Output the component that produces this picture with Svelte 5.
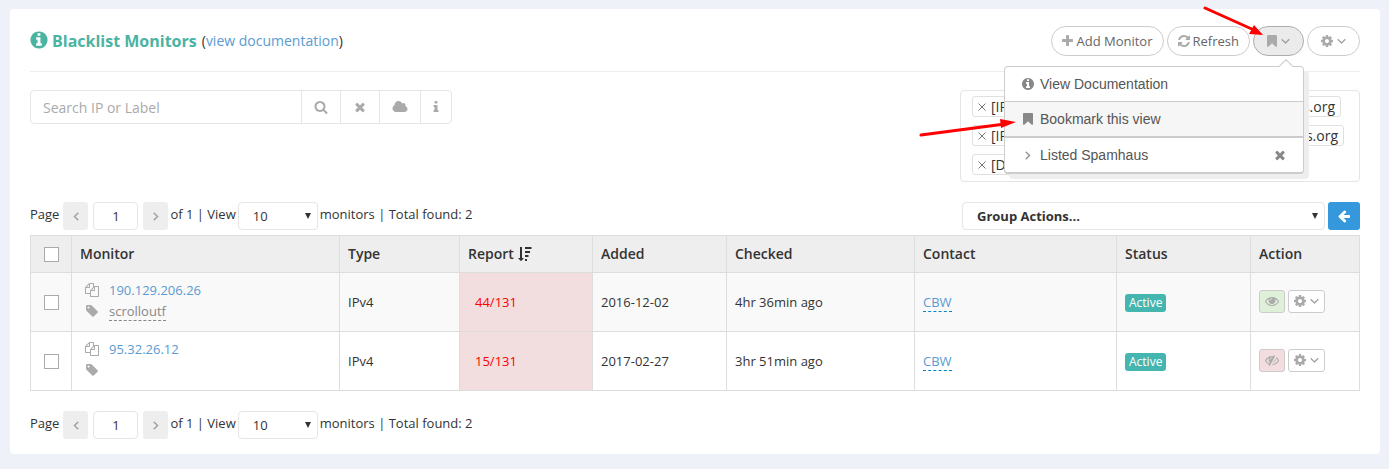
<script lang="ts">
  interface Monitor {
    address: string;
    label: string;
    type: string;
    report: string;
    added: string;
    checked: string;
    contact: string;
    watched: boolean;
  }

  const monitors: Monitor[] = [
    {
      address: '190.129.206.26',
      label: 'scrolloutf',
      type: 'IPv4',
      report: '44/131',
      added: '2016-12-02',
      checked: '4hr 36min ago',
      contact: 'CBW',
      watched: true
    },
    {
      address: '95.32.26.12',
      label: '',
      type: 'IPv4',
      report: '15/131',
      added: '2017-02-27',
      checked: '3hr 51min ago',
      contact: 'CBW',
      watched: false
    }
  ];

  const filters = [
    { kind: '[IP]', host: 'spamhaus.org', size: 'wide' },
    { kind: '[IP]', host: 'spamhaus.org', size: 'wider' },
    { kind: '[D]', host: '', size: 'short' }
  ];

  // Icon outlines on a 1792 unit grid
  const icons: Record<string, string> = {
    infoCircle:
      'M1152 1376v-160q0-14-9-23t-23-9h-96v-512q0-14-9-23t-23-9h-320q-14 0-23 9t-9 23v160q0 14 9 23t23 9h96v320h-96q-14 0-23 9t-9 23v160q0 14 9 23t23 9h448q14 0 23-9t9-23zm-128-896v-160q0-14-9-23t-23-9h-192q-14 0-23 9t-9 23v160q0 14 9 23t23 9h192q14 0 23-9t9-23zm640 416q0 209-103 385.5t-279.5 279.5-385.5 103-385.5-103-279.5-279.5-103-385.5 103-385.5 279.5-279.5 385.5-103 385.5 103 279.5 279.5 103 385.5z',
    plus: 'M1600 736v192q0 40-28 68t-68 28h-416v416q0 40-28 68t-68 28h-192q-40 0-68-28t-28-68v-416h-416q-40 0-68-28t-28-68v-192q0-40 28-68t68-28h416v-416q0-40 28-68t68-28h192q40 0 68 28t28 68v416h416q40 0 68 28t28 68z',
    refresh:
      'M1639 1056q0 5-1 7-64 268-268 434.5t-478 166.5q-146 0-282.5-55t-243.5-157l-129 129q-19 19-45 19t-45-19-19-45v-448q0-26 19-45t45-19h448q26 0 45 19t19 45-19 45l-137 137q71 66 161 102t187 36q134 0 250-65t186-179q11-17 53-117 8-23 30-23h192q13 0 22.5 9.5t9.5 22.5zm25-800v448q0 26-19 45t-45 19h-448q-26 0-45-19t-19-45 19-45l138-138q-148-137-349-137-134 0-250 65t-186 179q-11 17-53 117-8 23-30 23h-199q-13 0-22.5-9.5t-9.5-22.5v-7q65-268 270-434.5t480-166.5q146 0 284 55.5t245 156.5l130-129q19-19 45-19t45 19 19 45z',
    bookmark:
      'M1420 128q23 0 44 9 33 13 52.5 41t19.5 62v1289q0 34-19.5 62t-52.5 41q-19 8-44 8-48 0-83-32l-441-424-441 424q-36 33-83 33-23 0-44-9-33-13-52.5-41t-19.5-62v-1289q0-34 19.5-62t52.5-41q21-9 44-9h1048z',
    cog: 'M1152 896q0-106-75-181t-181-75-181 75-75 181 75 181 181 75 181-75 75-181zm512-109v222q0 12-8 23t-20 13l-185 28q-19 54-39 91 35 50 107 138 10 12 10 25t-9 23q-27 37-99 108t-94 71q-12 0-26-9l-138-108q-44 23-91 38-16 136-29 186-7 28-36 28h-222q-14 0-24.5-8.5t-11.5-21.5l-28-184q-49-16-90-37l-141 107q-10 9-25 9-14 0-25-11-126-114-165-168-7-10-7-23 0-12 8-23 15-21 51-66.5t54-70.5q-27-50-41-99l-183-27q-13-2-21-12.5t-8-23.5v-222q0-12 8-23t19-13l186-28q14-46 39-92-40-57-107-138-10-12-10-24 0-10 9-23 26-36 98.5-107.5t94.5-71.5q13 0 26 10l138 107q44-23 91-38 16-136 29-186 7-28 36-28h222q14 0 24.5 8.5t11.5 21.5l28 184q49 16 90 37l142-107q9-9 24-9 13 0 25 10 129 119 165 170 7 8 7 22 0 12-8 23-15 21-51 66.5t-54 70.5q26 50 41 98l183 28q13 2 21 12.5t8 23.5z',
    search:
      'M1216 832q0-185-131.5-316.5t-316.5-131.5-316.5 131.5-131.5 316.5 131.5 316.5 316.5 131.5 316.5-131.5 131.5-316.5zm512 832q0 52-38 90t-90 38q-54 0-90-38l-343-342q-179 124-399 124-143 0-273.5-55.5t-225-150-150-225-55.5-273.5 55.5-273.5 150-225 225-150 273.5-55.5 273.5 55.5 225 150 150 225 55.5 273.5q0 220-124 399l343 343q37 37 37 90z',
    times:
      'M1490 1322q0 40-28 68l-136 136q-28 28-68 28t-68-28l-294-294-294 294q-28 28-68 28t-68-28l-136-136q-28-28-28-68t28-68l294-294-294-294q-28-28-28-68t28-68l136-136q28-28 68-28t68 28l294 294 294-294q28-28 68-28t68 28l136 136q28 28 28 68t-28 68l-294 294 294 294q28 28 28 68z',
    cloud:
      'M1984 1152q0 159-112.5 271.5t-271.5 112.5h-1088q-185 0-316.5-131.5t-131.5-316.5q0-132 71-241.5t187-163.5q-2-28-2-43 0-212 150-362t362-150q158 0 286.5 88t187.5 230q70-62 166-62 106 0 181 75t75 181q0 75-41 138 129 30 213 134.5t84 239.5z',
    info: 'M1216 1344v128q0 26-19 45t-45 19h-512q-26 0-45-19t-19-45v-128q0-26 19-45t45-19h64v-384h-64q-26 0-45-19t-19-45v-128q0-26 19-45t45-19h384q26 0 45 19t19 45v576h64q26 0 45 19t19 45zm-128-1152v192q0 26-19 45t-45 19h-256q-26 0-45-19t-19-45v-192q0-26 19-45t45-19h256q26 0 45 19t19 45z',
    tag: 'M576 448q0-53-37.5-90.5t-90.5-37.5-90.5 37.5-37.5 90.5 37.5 90.5 90.5 37.5 90.5-37.5 37.5-90.5zm1067 576q0 53-37 90l-491 492q-39 37-91 37-53 0-90-37l-715-716q-38-37-64.5-101t-26.5-117v-416q0-52 38-90t90-38h416q53 0 117 26.5t102 64.5l715 714q37 39 37 91z',
    files:
      'M1696 384q40 0 68 28t28 68v1216q0 40-28 68t-68 28h-960q-40 0-68-28t-28-68v-288h-544q-40 0-68-28t-28-68v-672q0-40 20-88t48-76l408-408q28-28 76-48t88-20h416q40 0 68 28t28 68v328q68-40 128-40h416zm-544 213l-299 299h299v-299zm-640-384l-299 299h299v-299zm196 647l316-316v-416h-384v416q0 40-28 68t-68 28h-416v640h512v-256q0-40 20-88t48-76zm956 804v-1152h-384v416q0 40-28 68t-68 28h-416v640h896z',
    arrowLeft:
      'M1664 896v128q0 53-32.5 90.5t-84.5 37.5h-704l293 294q38 36 38 90t-38 90l-75 76q-37 37-90 37-52 0-91-37l-651-652q-37-37-37-90 0-52 37-91l651-650q38-38 91-38 52 0 90 38l75 74q38 38 38 91t-38 91l-293 293h704q52 0 84.5 37.5t32.5 90.5z',
    eye: 'M1664 960q-152-236-381-353 61 104 61 225 0 185-131.5 316.5t-316.5 131.5-316.5-131.5-131.5-316.5q0-121 61-225-229 117-381 353 133 205 333.5 326.5t434.5 121.5 434.5-121.5 333.5-326.5zm-720-384q0-20-14-34t-34-14q-125 0-214.5 89.5t-89.5 214.5q0 20 14 34t34 14 34-14 14-34q0-86 61-147t147-61q20 0 34-14t14-34zm848 384q0 34-20 69-140 230-376.5 368.5t-499.5 138.5-499.5-139-376.5-368q-20-35-20-69t20-69q140-229 376.5-368t499.5-139 499.5 139 376.5 368q20 35 20 69z',
    eyeSlash:
      'M555 1335l78-141q-87-63-136-159t-49-203q0-121 61-225-229 117-381 353 167 258 427 375zm389-759q0-20-14-34t-34-14q-125 0-214.5 89.5t-89.5 214.5q0 20 14 34t34 14 34-14 14-34q0-86 61-147t147-61q20 0 34-14t14-34zm363-191q0 7-1 9-106 189-316 567t-315 566l-49 89q-10 16-28 16-12 0-134-70-16-10-16-28 0-12 44-87-143-65-263.5-173t-208.5-245q-20-31-20-69t20-69q153-235 380-371t496-136q89 0 180 17l54-97q10-16 28-16 5 0 18 6t31 15.5 33 18.5 31.5 18.5 19.5 11.5q16 10 16 27zm37 447q0 139-79 253.5t-209 164.5l280-502q8 45 8 84zm448 128q0 35-20 69-39 64-109 145-150 172-347.5 267t-419.5 95l74-132q212-18 392.5-137t301.5-307q-115-179-282-294l63-112q95 64 182.5 153t144.5 184q20 34 20 69z',
    sortDesc:
      'M736 1440q0 12-10 24l-319 319q-10 9-23 9-12 0-23-9l-320-320q-15-16-7-35 8-20 30-20h192v-1376q0-14 9-23t23-9h192q14 0 23 9t9 23v1376h192q14 0 23 9t9 23zM896 1536h256v256h-256zM896 1024h448v256h-448zM896 512h640v256h-640zM896 0h832v256h-832z',
    angleDown:
      'M1395 736q0 13-10 23l-466 466q-10 10-23 10t-23-10l-466-466q-10-10-10-23t10-23l50-50q10-10 23-10t23 10l393 393 393-393q10-10 23-10t23 10l50 50q10 10 10 23z',
    angleRight:
      'M1171 960q0 13-10 23l-466 466q-10 10-23 10t-23-10l-50-50q-10-10-10-23t10-23l393-393-393-393q-10-10-10-23t10-23l50-50q10-10 23-10t23 10l466 466q10 10 10 23z',
    angleLeft:
      'M1203 544q0 13-10 23l-393 393 393 393q10 10 10 23t-10 23l-50 50q-10 10-23 10t-23-10l-466-466q-10-10-10-23t10-23l466-466q10-10 23-10t23 10l50 50q10 10 10 23z'
  };

  // Widths of the icons that are not as wide as they are high, in 128 unit steps
  const widths: Record<string, number> = {
    angleDown: 9,
    bookmark: 10,
    plus: 11,
    refresh: 12,
    cog: 12,
    cloud: 16
  };
</script>

{#snippet icon(name: string, size: number = 14)}
  <svg class="icon" class:angle={name.startsWith('angle')} width={size} height={size} viewBox="0 0 1792 1792" aria-hidden="true">
    <path d={icons[name]} />
  </svg>
{/snippet}

{#snippet trimmed(name: string)}
  {@const w = widths[name]}
  <svg
    class="icon"
    class:angle={name.startsWith('angle')}
    width={w}
    height="14"
    viewBox="{w > 14 ? 0 : (14 - w) * 64} 0 {w * 128} 1792"
    aria-hidden="true"
  >
    <path d={icons[name]} />
  </svg>
{/snippet}

{#snippet caret()}
  <svg class="caret" width="6" height="6" viewBox="0 0 6 6" aria-hidden="true">
    <path d="M0 0h6L3 6z" />
  </svg>
{/snippet}

{#snippet pager()}
  <div class="pager">
    <span>Page</span>
    <button class="page-btn" aria-label="Previous page">{@render icon('angleLeft')}</button>
    <input class="page-input" type="text" value="1" aria-label="Page number" />
    <button class="page-btn" aria-label="Next page">{@render icon('angleRight')}</button>
    <span>of 1 | View</span>
    <span class="select-wrap view">
      <select aria-label="Monitors per page">
        <option>10</option>
        <option>25</option>
        <option>50</option>
      </select>
      {@render caret()}
    </span>
    <span>monitors | Total found: 2</span>
  </div>
{/snippet}

<main class="panel">
  <header>
    <div class="title">
      {@render icon('infoCircle', 20)}
      <h1>Blacklist Monitors</h1>
      <span>(<a href="#documentation">view documentation</a>)</span>
    </div>
    <div class="tools">
      <button class="pill">{@render trimmed('plus')}Add Monitor</button>
      <button class="pill">{@render trimmed('refresh')}Refresh</button>
      <div class="dropdown">
        <button class="pill compact active" aria-label="Bookmarks" aria-expanded="true">
          {@render trimmed('bookmark')}{@render trimmed('angleDown')}
        </button>
        <ul class="menu">
          <li><a href="#documentation">{@render icon('infoCircle')}View Documentation</a></li>
          <li class="hover"><a href="#bookmark">{@render icon('bookmark')}Bookmark this view</a></li>
          <li>
            <a href="#spamhaus">{@render icon('angleRight')}Listed Spamhaus</a>
            <button aria-label="Remove bookmark">{@render icon('times')}</button>
          </li>
        </ul>
      </div>
      <button class="pill compact" aria-label="Settings">
        {@render trimmed('cog')}{@render trimmed('angleDown')}
      </button>
    </div>
  </header>

  <div class="filters">
    <form class="search">
      <input type="text" placeholder="Search IP or Label" aria-label="Search IP or Label" />
      <button type="button" aria-label="Search">{@render icon('search')}</button>
      <button type="button" aria-label="Clear">{@render icon('times')}</button>
      <button type="button" aria-label="Cloud">{@render trimmed('cloud')}</button>
      <button type="button" class="slim" aria-label="Info">{@render icon('info')}</button>
    </form>
    <div class="tags">
      {#each filters as filter}
        <div class="tag {filter.size}">
          <button aria-label="Remove filter">
            <svg width="8" height="8" viewBox="0 0 8 8"><path d="M0.5 0.5l7 7M7.5 0.5l-7 7" /></svg>
          </button>
          <span>{filter.kind}</span>
          <span class="host">{filter.host}</span>
        </div>
      {/each}
    </div>
  </div>

  <div class="table-bar">
    {@render pager()}
    <div class="group">
      <span class="select-wrap actions">
        <select aria-label="Group actions">
          <option>Group Actions...</option>
        </select>
        {@render caret()}
      </span>
      <button class="apply" aria-label="Apply">{@render icon('arrowLeft')}</button>
    </div>
  </div>

  <table>
    <colgroup>
      <col class="c-check" />
      <col class="c-monitor" />
      <col class="c-type" />
      <col class="c-report" />
      <col class="c-added" />
      <col class="c-checked" />
      <col class="c-contact" />
      <col class="c-status" />
      <col />
    </colgroup>
    <thead>
      <tr>
        <th class="check"><input type="checkbox" aria-label="Select all" /></th>
        <th>Monitor</th>
        <th>Type</th>
        <th>Report {@render icon('sortDesc')}</th>
        <th>Added</th>
        <th>Checked</th>
        <th>Contact</th>
        <th>Status</th>
        <th>Action</th>
      </tr>
    </thead>
    <tbody>
      {#each monitors as m}
        <tr>
          <td class="check"><input type="checkbox" aria-label="Select {m.address}" /></td>
          <td class="monitor">
            <div class="line">{@render icon('files')}<a href="#monitor">{m.address}</a></div>
            <div class="line">
              {@render icon('tag')}
              {#if m.label}<span class="label">{m.label}</span>{/if}
            </div>
          </td>
          <td>{m.type}</td>
          <td class="report">{m.report}</td>
          <td>{m.added}</td>
          <td>{m.checked}</td>
          <td><a class="contact" href="#contact">{m.contact}</a></td>
          <td><span class="badge">Active</span></td>
          <td>
            <div class="row-actions">
              <button class={m.watched ? 'on' : 'off'} aria-label="Toggle watching">
                {@render icon(m.watched ? 'eye' : 'eyeSlash')}
              </button>
              <button aria-label="Monitor settings">
                {@render trimmed('cog')}{@render trimmed('angleDown')}
              </button>
            </div>
          </td>
        </tr>
      {/each}
    </tbody>
  </table>

  <div class="table-bar bottom">
    {@render pager()}
  </div>

  <!-- Pointers to the bookmark button and its menu entry -->
  <svg class="pointers" width="350" height="140" viewBox="0 0 350 140" aria-hidden="true">
    <path class="shaft" d="M196 8L245 30M-88 135L-4 124" />
    <path class="head" d="M254 35L240 34L245 25zM7 122L-8 128L-9 119z" />
  </svg>
</main>

<style>
  :global(body) {
    background: #eef1f7;
    color: #333;
    font-family: 'Open Sans', 'Liberation Sans', sans-serif;
    font-size: 13px;
    line-height: 20px;
  }

  .panel {
    position: relative;
    margin: 9px;
    margin-left: 10px;
    padding: 0 20px 15px;
    background: #fff;
    border-radius: 4px;
  }

  button,
  input,
  select {
    box-sizing: border-box;
    margin: 0;
    font: inherit;
    color: inherit;
  }

  button {
    display: flex;
    align-items: center;
    justify-content: center;
    padding: 0;
    background: #fff;
    cursor: pointer;
  }

  a {
    color: #5b9bd1;
    text-decoration: none;
  }

  .icon {
    flex: none;
    fill: #aaa;
  }

  .icon.angle {
    fill: #999;
    stroke: #999;
    stroke-width: 40;
  }

  header {
    box-sizing: border-box;
    display: flex;
    justify-content: space-between;
    align-items: center;
    height: 63px;
    padding-top: 2px;
    border-bottom: 1px solid #eee;
  }

  .title {
    display: flex;
    align-items: center;
    gap: 5px;
    font-size: 14px;
  }

  .title .icon {
    margin: 0 -2px 2px -1px;
    fill: #4bb3a2;
  }

  h1 {
    margin: 0;
    font-size: 16px;
    font-weight: 700;
    color: #4bb3a2;
  }

  .tools {
    display: flex;
    gap: 3px;
  }

  .pill {
    gap: 3px;
    height: 30px;
    padding: 0 10px;
    border: 1px solid #ccc;
    border-radius: 15px;
    color: #666;
  }

  .pill.compact {
    gap: 4px;
    padding: 0 13px;
  }

  .pill.active {
    background: #ebebeb;
    border-color: #adadad;
  }

  .dropdown {
    position: relative;
  }

  .menu {
    position: absolute;
    z-index: 2;
    top: 40px;
    right: 0;
    width: 298px;
    margin: 0;
    padding: 0;
    list-style: none;
    background: #fff;
    border: 1px solid #ccc;
    border-bottom-width: 2px;
    border-radius: 4px;
    box-shadow: 5px 5px #eee;
    font-family: 'Liberation Sans', sans-serif;
    font-size: 14px;
  }

  .menu::before {
    content: '';
    position: absolute;
    top: -6px;
    right: 12px;
    width: 9px;
    height: 9px;
    background: #fff;
    border: solid #ccc;
    border-width: 1px 0 0 1px;
    transform: rotate(45deg);
  }

  .menu li {
    display: flex;
    align-items: center;
    height: 34px;
    padding: 0 16px;
  }

  .menu li.hover {
    background: #f6f6f6;
    border-top: 1px solid #ccc;
    border-bottom: 2px solid #ccc;
  }

  .menu a {
    flex: 1;
    display: flex;
    align-items: center;
    gap: 5px;
    color: #555;
  }

  .menu .icon {
    fill: #888;
  }

  .menu button {
    border: 0;
  }

  .filters {
    display: flex;
    justify-content: space-between;
    align-items: flex-start;
    margin-top: 18px;
  }

  .search {
    display: flex;
    border: 1px solid #e5e5e5;
    border-radius: 4px;
  }

  .search input {
    width: 270px;
    height: 32px;
    padding: 0 12px;
    border: 0;
    background: none;
    font-size: 14px;
  }

  .search input::placeholder {
    color: #aaa;
  }

  .search button {
    padding: 0 12px;
    border: 0;
    border-left: 1px solid #e5e5e5;
    background: none;
  }

  .search button.slim {
    padding: 0 8px;
  }

  .tags {
    box-sizing: border-box;
    display: flex;
    flex-direction: column;
    gap: 8px;
    width: 400px;
    padding: 5px 11px 6px;
    border: 1px solid #e5e5e5;
    border-radius: 4px;
    font-size: 14px;
  }

  .tag {
    box-sizing: border-box;
    display: flex;
    align-items: center;
    gap: 5px;
    height: 21px;
    padding: 0 5px;
    border: 1px solid #e0e0e0;
    border-radius: 3px;
  }

  .tag.wide {
    width: 369px;
  }

  .tag.wider {
    width: 372px;
  }

  .tag.short {
    width: 200px;
  }

  .tag button {
    border: 0;
  }

  .tag path {
    stroke: #777;
  }

  .host {
    margin-left: auto;
  }

  .table-bar {
    display: flex;
    justify-content: space-between;
    align-items: center;
    margin: 20px 0 5px;
  }

  .table-bar.bottom {
    margin-bottom: 0;
  }

  .pager {
    display: flex;
    gap: 2px;
  }

  .page-btn {
    width: 25px;
    height: 28px;
    margin-left: 2px;
    border: 0;
    border-radius: 3px;
    background: #eee;
  }

  .page-input {
    width: 45px;
    height: 28px;
    margin: 0 1px 0 3px;
    border: 1px solid #e5e5e5;
    border-radius: 4px;
    text-align: center;
  }

  .pager > span {
    padding-top: 2px;
  }

  .select-wrap {
    position: relative;
  }

  .pager .select-wrap {
    padding: 0;
  }

  select {
    appearance: none;
    width: 100%;
    height: 28px;
    padding: 0 14px;
    border: 1px solid #e5e5e5;
    border-radius: 4px;
    background: #fff;
  }

  .caret {
    position: absolute;
    top: 11px;
    right: 7px;
    fill: #333;
  }

  .view {
    width: 80px;
  }

  .group {
    display: flex;
    gap: 3px;
    width: 398px;
  }

  .actions {
    flex: 1;
    font-weight: 700;
  }

  .apply {
    width: 32px;
    height: 28px;
    border: 0;
    border-radius: 3px;
    background: #3598dc;
  }

  .apply .icon {
    fill: #fff;
  }

  table {
    width: 100%;
    table-layout: fixed;
    border-collapse: collapse;
  }

  .c-check {
    width: 41px;
  }

  .c-monitor {
    width: 268px;
  }

  .c-type {
    width: 120px;
  }

  .c-report {
    width: 133px;
  }

  .c-added,
  .c-status {
    width: 134px;
  }

  .c-checked {
    width: 188px;
  }

  .c-contact {
    width: 202px;
  }

  th,
  td {
    box-sizing: border-box;
    padding: 0 8px;
    border: 1px solid #ddd;
    text-align: left;
  }

  th {
    height: 37px;
    background: #eee;
    font-size: 14px;
    font-weight: 600;
  }

  th .icon {
    fill: #333;
    vertical-align: -2px;
  }

  td {
    height: 59px;
  }

  tbody tr:nth-child(odd) {
    background: #f9f9f9;
  }

  .check input {
    display: block;
    appearance: none;
    width: 15px;
    height: 15px;
    margin: 0 auto;
    border: 1px solid #aaa;
    background: #fff;
  }

  .monitor {
    padding-bottom: 3px;
  }

  .line {
    display: flex;
    align-items: center;
    gap: 10px;
    height: 21px;
    padding-left: 5px;
  }

  .label {
    border-bottom: 1px dashed #888;
    color: #888;
    line-height: 18px;
  }

  td.report {
    padding-left: 15px;
    background: #f2dede;
    color: #f00;
  }

  .contact {
    display: inline-block;
    border-bottom: 1px dashed #08c;
    line-height: 18px;
  }

  .badge {
    display: inline-block;
    padding: 0 4px;
    border-radius: 3px;
    background: #45b6af;
    color: #fff;
    font-size: 12px;
    line-height: 18px;
    vertical-align: middle;
  }

  .row-actions {
    display: flex;
    gap: 3px;
    padding-bottom: 2px;
  }

  .row-actions button {
    gap: 4px;
    height: 23px;
    padding: 0 5px;
    border: 1px solid #ccc;
    border-radius: 3px;
  }

  .row-actions .on {
    background: #dff0d8;
  }

  .row-actions .off {
    background: #f2dede;
  }

  .pointers {
    position: absolute;
    z-index: 3;
    top: -9px;
    right: 21px;
    overflow: visible;
    pointer-events: none;
  }

  .shaft {
    fill: none;
    stroke: #f00;
    stroke-width: 3;
    stroke-linecap: round;
  }

  .head {
    fill: #f00;
  }
</style>
